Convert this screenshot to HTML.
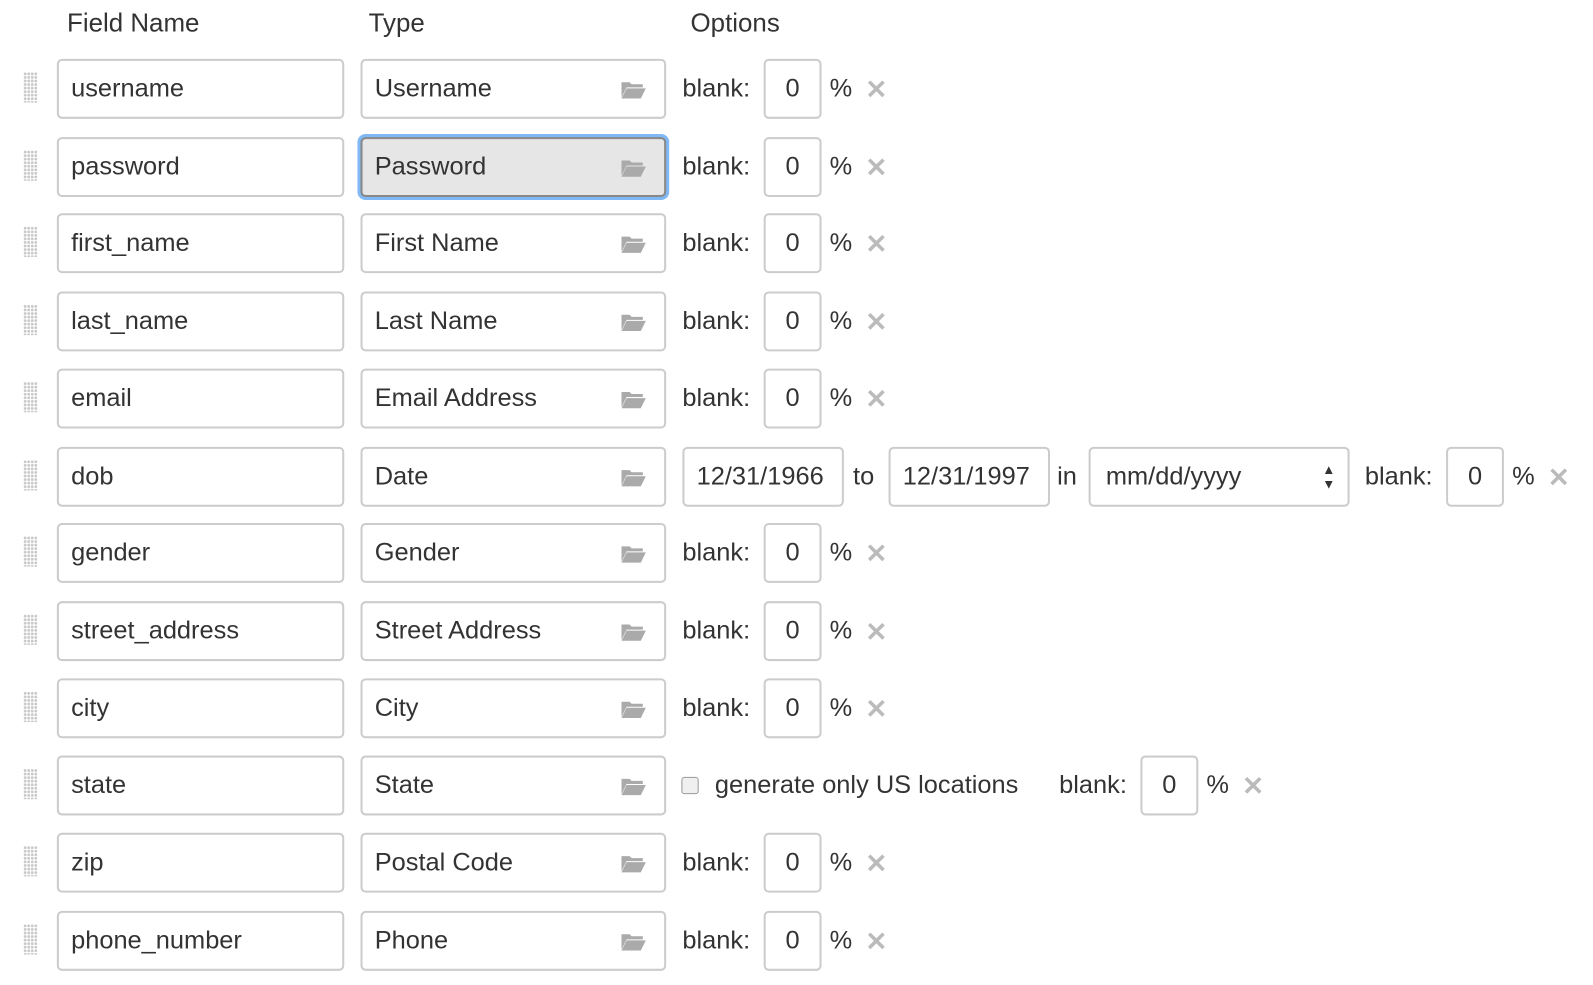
<!DOCTYPE html>
<html><head><style>
body{margin:0;width:1593px;height:984px;background:#fff;font-family:"Liberation Sans",sans-serif;color:#333;position:relative;overflow:hidden}
#w{position:absolute;left:0;top:0;width:1570px;height:970px;transform:scale(1.0155);transform-origin:0 0}
.a{position:absolute}
.h{font-size:25.5px;top:9px}
.in{position:absolute;box-sizing:border-box;border:2px solid #ccc;border-radius:5px;height:59px;font-size:25px;line-height:55px;padding-left:12px;background:#fff}
.t{font-size:25px;position:absolute}
.x{position:absolute;color:#bbb;font-size:26px;font-weight:bold}
.g{position:absolute;width:14px;height:30px;background-image:radial-gradient(circle,#c8c8c8 1.3px,transparent 1.4px);background-size:3.5px 3.5px}
.f{position:absolute;width:26px;height:20px}
</style></head><body>
<div id="w">
<div class="a h" style="left:66px">Field Name</div>
<div class="a h" style="left:363px">Type</div>
<div class="a h" style="left:680px">Options</div>
<div id="r"></div>
</div>
<script>
var rows=[["username","Username",87],["password","Password",164],["first_name","First Name",239],["last_name","Last Name",316],["email","Email Address",392],["dob","Date",469],["gender","Gender",544],["street_address","Street Address",621],["city","City",697],["state","State",773],["zip","Postal Code",849],["phone_number","Phone",926]];
var h="";
var fold='<svg class="f" viewBox="0 0 26 20"><path d="M1 3h8l2 2h11v3H6L1 18z" fill="#aaa"/><path d="M6 9h19l-5 10H1z" fill="#aaa"/></svg>';
function blank(x,c){return '<div class="t" style="left:'+x+'px;top:'+(c-14)+'px">blank:</div><div class="in" style="left:'+(x+80)+'px;width:57px;top:'+(c-29)+'px;padding-left:0;text-align:center">0</div><div class="t" style="left:'+(x+145)+'px;top:'+(c-14)+'px">%</div><div class="x" style="left:'+(x+180)+'px;top:'+(c-14)+'px">✕</div>';}
rows.forEach(function(r,i){var c=r[2],t=c-29;
h+='<div class="g" style="left:23px;top:'+(c-16)+'px"></div>';
h+='<div class="in" style="left:56px;width:283px;top:'+t+'px">'+r[0]+'</div>';
var sel=i==1;
h+='<div class="in" style="left:355px;width:301px;top:'+t+'px;'+(sel?'background:#e6e6e6;border-color:#888;box-shadow:0 0 0 3px #7fb8f5;':'')+'">'+r[1]+'</div>';
h+='<div style="position:absolute;left:611px;top:'+(c-9)+'px">'+fold+'</div>';
if(r[0]=="dob"){
h+='<div class="in" style="left:672px;width:159px;top:'+t+'px">12/31/1966</div><div class="t" style="left:840px;top:'+(c-14)+'px">to</div>';
h+='<div class="in" style="left:875px;width:159px;top:'+t+'px">12/31/1997</div><div class="t" style="left:1041px;top:'+(c-14)+'px">in</div>';
h+='<div class="in" style="left:1072px;width:257px;top:'+t+'px;padding-left:15px">mm/dd/yyyy<span style="position:absolute;right:12px;top:0;font-size:13px;line-height:14px;padding-top:14px">▲<br>▼</span></div>';
h+=blank(1344,c);
}else if(r[0]=="state"){
h+='<div style="position:absolute;left:671px;top:'+(c-8)+'px;width:17px;height:17px;border:1px solid #999;border-radius:3px;background:#f0f0f0;box-sizing:border-box"></div>';
h+='<div class="t" style="left:704px;top:'+(c-14)+'px">generate only US locations</div>';
h+=blank(1043,c);
}else h+=blank(672,c);
});
document.getElementById("r").innerHTML=h;
</script>
</body></html>
